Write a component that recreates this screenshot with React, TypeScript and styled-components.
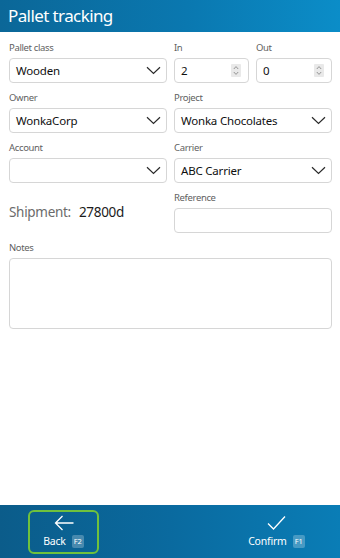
import React from "react";
import styled, { createGlobalStyle } from "styled-components";

const GlobalStyle = createGlobalStyle`
    html, body {
        margin: 0;
        padding: 0;
        height: 100%;
    }
    body {
        font-family: "Noto Sans", "Open Sans", sans-serif;
        background: #ffffff;
        color: #1b1b1b;
    }
    #root {
        height: 100%;
    }
`;

const Chevron = () => (
    <svg width="15" height="9" viewBox="0 0 15 9" fill="none">
        <path d="M1 1.2 L7.5 7.5 L14 1.2" stroke="#2a2a2a" strokeWidth="1.2" />
    </svg>
);

const ArrowLeft = () => (
    <svg width="20" height="16" viewBox="0 0 20 16" fill="none">
        <path d="M19.5 8 H1.5 M8.5 1 L1.5 8 L8.5 15" stroke="#ffffff" strokeWidth="1.3" />
    </svg>
);

const Check = () => (
    <svg width="19" height="16" viewBox="0 0 19 16" fill="none">
        <path d="M1 8.5 L6.5 14 L18 1.5" stroke="#ffffff" strokeWidth="1.3" />
    </svg>
);

const SpinArrows = () => (
    <svg width="6" height="11" viewBox="0 0 6 11" fill="none">
        <path d="M0.8 4 L3 1.6 L5.2 4 M0.8 7 L3 9.4 L5.2 7" stroke="#8a8a8a" strokeWidth="0.9" />
    </svg>
);

export default function App() {
    return (
        <>
            <GlobalStyle />
            <Screen>
                <Header>Pallet tracking</Header>
                <Content>
                    <Row>
                        <Field>
                            <Label>Pallet class</Label>
                            <Select>
                                <Value>Wooden</Value>
                                <Chevron />
                            </Select>
                        </Field>
                        <Pair>
                            <Field>
                                <Label lowered>In</Label>
                                <NumberBox>
                                    <Value>2</Value>
                                    <Spinner><SpinArrows /></Spinner>
                                </NumberBox>
                            </Field>
                            <Field>
                                <Label lowered>Out</Label>
                                <NumberBox>
                                    <Value>0</Value>
                                    <Spinner><SpinArrows /></Spinner>
                                </NumberBox>
                            </Field>
                        </Pair>
                    </Row>
                    <Row>
                        <Field>
                            <Label>Owner</Label>
                            <Select>
                                <Value>WonkaCorp</Value>
                                <Chevron />
                            </Select>
                        </Field>
                        <Field>
                            <Label>Project</Label>
                            <Select>
                                <Value>Wonka Chocolates</Value>
                                <Chevron />
                            </Select>
                        </Field>
                    </Row>
                    <Row>
                        <Field>
                            <Label>Account</Label>
                            <Select>
                                <Value />
                                <Chevron />
                            </Select>
                        </Field>
                        <Field>
                            <Label>Carrier</Label>
                            <Select>
                                <Value>ABC Carrier</Value>
                                <Chevron />
                            </Select>
                        </Field>
                    </Row>
                    <Row>
                        <Shipment>
                            <ShipmentLabel>Shipment:</ShipmentLabel>
                            <ShipmentValue>27800d</ShipmentValue>
                        </Shipment>
                        <Field>
                            <Label>Reference</Label>
                            <TextBox />
                        </Field>
                    </Row>
                    <Field>
                        <Label>Notes</Label>
                        <NotesBox />
                    </Field>
                </Content>
                <Footer>
                    <FooterButton focused>
                        <ArrowLeft />
                        <ButtonText>
                            Back <Key>F2</Key>
                        </ButtonText>
                    </FooterButton>
                    <FooterButton>
                        <Check />
                        <ButtonText>
                            Confirm <Key>F1</Key>
                        </ButtonText>
                    </FooterButton>
                </Footer>
            </Screen>
        </>
    );
}

const Screen = styled.div`
    display: flex;
    flex-direction: column;
    height: 100vh;
`;

const Header = styled.div`
    height: 32px;
    box-sizing: border-box;
    padding: 4px 8px 0;
    font-size: 17px;
    letter-spacing: -0.6px;
    line-height: 24px;
    color: #ffffff;
    background: linear-gradient(90deg, #0b6798 0%, #0a78b0 55%, #0b8dc8 100%);
`;

const Content = styled.div`
    flex: 1;
    display: flex;
    flex-direction: column;
    gap: 8px;
    padding: 9px 8px 0 9px;
`;

const Row = styled.div`
    display: grid;
    grid-template-columns: 158px 158px;
    gap: 7px;
`;

const Pair = styled.div`
    display: grid;
    grid-template-columns: 75px 76px;
    gap: 7px;
`;

const Field = styled.div`
    display: flex;
    flex-direction: column;
`;

const Label = styled.div<{ lowered?: boolean }>`
    font-size: 9.5px;
    letter-spacing: -0.35px;
    line-height: 14px;
    color: #5f5f5f;
    margin-bottom: 3px;
    padding-top: ${({ lowered }) => (lowered ? "2px" : "0")};
    margin-top: ${({ lowered }) => (lowered ? "-2px" : "0")};
`;

const Box = styled.div`
    box-sizing: border-box;
    height: 25px;
    border: 1px solid #d6d6d6;
    border-radius: 4px;
    background: #ffffff;
    display: flex;
    align-items: center;
    padding: 0 6px;
`;

const Select = styled(Box)`
    justify-content: space-between;
    padding-right: 5px;
`;

const NumberBox = styled(Box)`
    justify-content: space-between;
    padding-right: 7px;
`;

const TextBox = styled(Box)``;

const NotesBox = styled(Box)`
    height: 71px;
`;

const Value = styled.span`
    font-size: 11.5px;
    letter-spacing: -0.2px;
    font-weight: 400;
    color: #0f0f0f;
    white-space: nowrap;
`;

const Spinner = styled.span`
    width: 10px;
    height: 13px;
    background: #e9e9e9;
    border-radius: 1px;
    display: flex;
    align-items: center;
    justify-content: center;
`;

const Shipment = styled.div`
    display: flex;
    align-items: baseline;
    gap: 8px;
    padding-top: 12px;
`;

const ShipmentLabel = styled.span`
    font-size: 13.5px;
    letter-spacing: -0.3px;
    color: #6b6b6b;
`;

const ShipmentValue = styled.span`
    font-size: 13.5px;
    letter-spacing: -0.3px;
    color: #1b1b1b;
`;

const Footer = styled.div`
    height: 53px;
    box-sizing: border-box;
    display: flex;
    justify-content: space-between;
    align-items: center;
    padding: 0 28px;
    background: linear-gradient(90deg, #0b5c8a 0%, #0a6a9f 50%, #0a7db6 100%);
`;

const FooterButton = styled.div<{ focused?: boolean }>`
    box-sizing: border-box;
    width: 71px;
    height: 44px;
    border: 2px solid ${({ focused }) => (focused ? "#6fc13d" : "transparent")};
    border-radius: 6px;
    display: flex;
    flex-direction: column;
    align-items: center;
    justify-content: center;
    gap: 4px;
    padding-bottom: 1px;
`;

const ButtonText = styled.div`
    display: flex;
    align-items: center;
    gap: 6px;
    font-size: 10.5px;
    letter-spacing: -0.2px;
    line-height: 13px;
    color: #ffffff;
    white-space: nowrap;
`;

const Key = styled.span`
    font-size: 7.5px;
    letter-spacing: 0;
    line-height: 13px;
    height: 13px;
    padding: 0 2px;
    min-width: 8px;
    text-align: center;
    border-radius: 2px;
    background: rgba(255, 255, 255, 0.25);
    color: #ffffff;
`;
